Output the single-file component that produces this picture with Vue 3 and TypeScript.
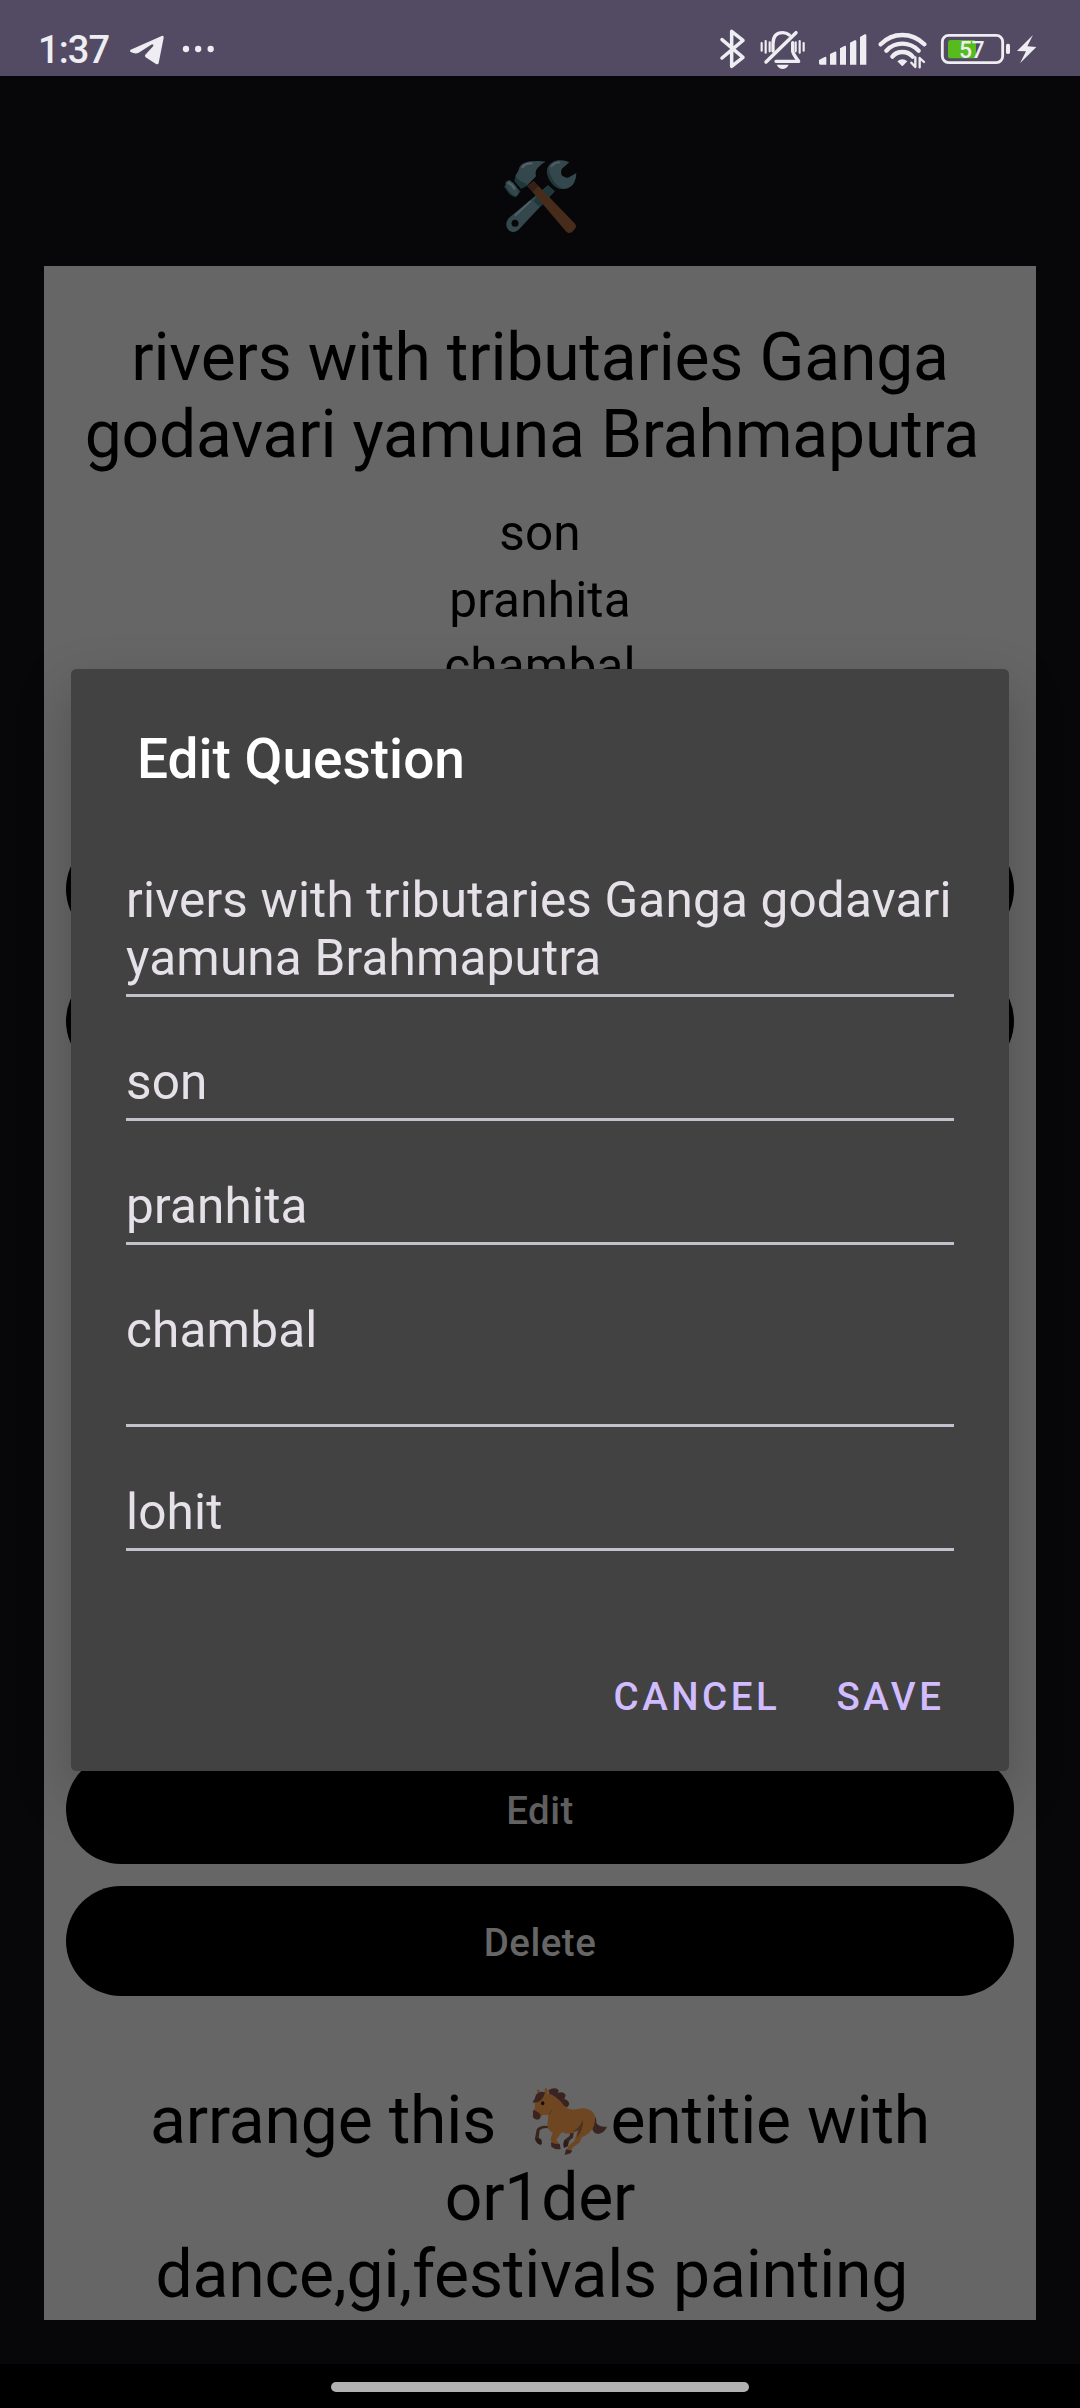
<script setup lang="ts">
interface Field {
  id: string
  lines: string[]
}

const question: string[] = ['rivers with tributaries Ganga', 'godavari yamuna Brahmaputra\u00a0']
const options: string[] = ['son', 'pranhita', 'chambal\n\u00a0', 'lohit']

const fields: Field[] = [
  { id: 'question', lines: ['rivers with tributaries Ganga godavari', 'yamuna Brahmaputra'] },
  { id: 'a', lines: ['son'] },
  { id: 'b', lines: ['pranhita'] },
  { id: 'c', lines: ['chambal', '\u00a0'] },
  { id: 'd', lines: ['lohit'] },
]
</script>

<template>
  <div class="screen">
    <header class="status">
      <span class="clock">1:37</span>
      <svg class="plane" viewBox="388 102 108 96" width="36" height="32">
        <path d="M393 149 L486 108 Q493 106 492 113 L477 189 Q475 195 469 192 L438 172 Q434 168 437 164 L461 138 Q463 133 457 133 L417 158 Q409 162 401 159 L393 156 Q388 153 393 149Z" />
      </svg>
      <svg class="dots" viewBox="546 135 99 24" width="33" height="8">
        <circle cx="558" cy="147" r="9.5" /><circle cx="594.5" cy="147" r="9.5" /><circle cx="632" cy="147" r="9.5" />
      </svg>
      <div class="indicators">
        <svg viewBox="88 84 84 126" width="28" height="42">
          <path class="line" stroke-width="10.5" d="M97 119 L160 172 L126 199 V94 L160 121 L97 174" />
        </svg>
        <svg class="bell" viewBox="208 84 144 126" width="48" height="42">
          <path class="line" stroke-width="10" d="M250 153 V130 Q251 98 279 98 Q291 98 299 105" stroke-linecap="butt" />
          <path class="line" stroke-width="10" d="M309 128 V153 Q310 162 327 184 H259" />
          <path class="line" stroke-width="10.5" d="M229 186 L319 98" />
          <path d="M261 194 H297 Q290 207 279 207 Q268 207 261 194Z" />
          <path class="line" stroke-width="6.5" stroke-linecap="butt" d="M216 129V152 M228 123V158 M240 127V154 M318 127V154 M330 123V158 M342 129V152" />
        </svg>
        <svg class="signal" viewBox="385 84 150 126" width="50" height="42">
          <path d="M388 190 V180 Q399 174 405 171 Q410 169 410 174 V194 H392Q388 194 388 190Z M421 194V162L435 155Q440 153 440 158V194Z M451 194V145L464 138Q469 136 469 141V194Z M481 194V128L495 121Q500 119 500 124V194Z M511 194V111L525 103Q530 101 530 106V194Z" />
        </svg>
        <svg class="wifi" viewBox="565 84 147 126" width="49" height="42">
          <path class="line" stroke-width="13" stroke-linecap="butt" d="M573 133 Q600 105 638 105 T704 133" />
          <path class="line" stroke-width="13" stroke-linecap="butt" d="M590 152 Q610 131 638 131 T687 152" />
          <path class="line" stroke-width="13" stroke-linecap="butt" d="M608 170 Q619 156 638 156 T669 170" />
          <path d="M623 184 Q638 171 653 184 L640 197 Q638 199 636 197Z" />
          <path class="line" stroke-width="7" stroke-linecap="butt" d="M677 172V201L665 188 M690 202V174L703 186" />
        </svg>
        <svg class="battery" viewBox="750 84 213 126" width="71" height="42">
          <rect class="line" x="757" y="106" width="181" height="82" rx="19" stroke-width="8.5" />
          <rect class="charge" x="774" y="120" width="84" height="55" rx="8" />
          <rect x="948" y="131" width="12" height="31" rx="5" />
          <text x="807" y="174" class="level">57</text>
        </svg>
        <svg class="bolt" viewBox="978 84 66 126" width="22" height="42">
          <path d="M1029 105 L981 153 L1008 154 L990 190 L1039 141 L1012 139Z" />
        </svg>
      </div>
    </header>

    <main class="page">
      <svg class="tools" viewBox="60 50 240 240" width="80" height="80">
        <path fill="#34474d" d="M204 135 L224 153 L118 266 Q104 282 88 271 Q73 259 82 240 Q84 236 90 230Z" />
        <path fill="#1e373b" d="M204 135 L224 153 L180 201 L160 181Z" />
        <path fill="#34474d" d="M268 66 Q252 58 234 60 Q210 64 202 84 Q198 106 212 124 Q226 146 250 146 Q274 145 283 126 Q289 112 289 98 L264 112 Q254 113 245 105 Q241 96 245 86Z" />
        <path fill="#1e373b" d="M205 79 Q198 106 212 124 Q226 146 250 146 Q229 137 218 118 Q207 100 205 79Z" />
        <path fill="none" stroke="#526268" stroke-width="5" stroke-linecap="round" d="M215 78 Q222 67 238 66 M106 225 L151 183" />
        <circle cx="105" cy="249" r="10.5" fill="#070709" />
        <path fill="#482c1b" d="M142 137 L161 122 L285 250 Q291 257 285 265 L276 275 Q267 281 259 274Z" />
        <path fill="#342019" d="M142 137 L161 122 L175 136 L158 156Z" />
        <path fill="#34474d" d="M107 105 Q116 93 119 79 Q128 65 155 63 Q178 60 197 64 Q183 70 173 83 Q164 92 168 108 L142 135 Q124 137 107 123Z" />
        <path fill="#1e373b" d="M107 105 Q112 121 136 129 L142 136 L123 146 L103 122Z" />
        <path fill="#1e373b" d="M88 119 L122 153 L109 169 Q100 172 88 161 L72 139Z" />
        <path fill="#34474d" d="M76 128 Q82 117 92 121 Q113 135 116 159 Q111 171 103 166 Q80 153 76 128Z" />
        <path fill="none" stroke="#526268" stroke-width="7" stroke-linecap="round" d="M128 80 Q136 69 155 69 M86 128 Q96 132 103 145" />
      </svg>

      <section class="sheet">
        <article class="entry first">
          <h2><span v-for="l in question" :key="l">{{ l }}</span></h2>
          <p v-for="o in options" :key="o" class="option">{{ o }}</p>
          <div class="buttons">
            <button aria-label="Edit"></button>
            <button aria-label="Delete"></button>
          </div>
        </article>

        <article class="entry second">
          <div class="buttons">
            <button>Edit</button>
            <button>Delete</button>
          </div>
        </article>

        <article class="entry third">
          <h2>
            <span>arrange this&nbsp;&nbsp;<svg class="horse" viewBox="84 75 246 220" width="82" height="73.3">
                <path fill="#39251c" d="M151 206 Q132 200 119 211 L116 233 L125 240 L123 253 Q111 254 105 235 L110 208 Q122 193 148 199Z" />
                <path fill="#39251c" d="M222 211 L219 233 Q204 240 204 258 L193 263 Q187 250 196 238 L209 228 L212 210Z" />
                <path fill="#2c1d1c" d="M109 234 L122 237 L126 250 L122 255 Q108 250 105 236Z M194 239 L206 247 L202 259 L192 264 Q188 250 194 239Z" />
                <path fill="#3a2422" d="M279 164 Q291 172 289 188 Q296 202 321 200 Q314 218 295 222 Q279 221 276 203Z" />
                <path fill="#3a2422" d="M145 91 Q163 80 175 89 Q177 94 174 99 Q191 92 197 106 L193 117 Q207 121 208 133 L202 142 L187 138 L150 107Z" />
                <path fill="#6f4622" d="M113 98 Q108 91 113 87 L122 96 L133 96 Q132 86 139 82 Q145 90 142 100 Q171 107 191 136 Q209 154 232 147 Q270 139 284 165 Q289 187 277 207 Q264 226 246 231 L238 248 L217 263 L211 278 L198 275 L206 257 L223 243 L233 213 Q211 226 185 217 L174 232 L169 239 L180 257 L169 263 L151 239 L158 218 Q137 207 143 187 L145 164 L127 165 L119 177 Q103 182 98 169 Q98 154 105 142 L104 119Z" />
                <path fill="#4b3220" d="M249 179 Q239 203 219 214 L235 211 L230 232 Q250 213 249 179Z M145 164 Q153 156 157 147 Q156 156 148 163Z" />
                <path fill="#3a2422" d="M135 98 Q121 91 108 104 Q105 119 97 127 Q125 132 135 98Z" />
                <path fill="#3a2422" d="M99 151 Q111 151 122 165 L119 176 Q108 183 99 172Z M153 246 L166 252 L179 251 L182 267 Q167 271 154 260Z M198 268 L217 272 L212 280 L194 285Z" />
                <ellipse cx="128" cy="130" rx="5" ry="6" fill="#170e0b" />
              </svg>entitie with</span>
            <span>or1der</span>
            <span>dance,gi,festivals painting&nbsp;</span>
          </h2>
        </article>
      </section>
    </main>

    <footer class="nav"><i /></footer>

    <div class="overlay">
      <div class="dialog" role="dialog">
        <h1>Edit Question</h1>
        <div class="fields">
          <div v-for="f in fields" :key="f.id" class="field">
            <span v-for="l in f.lines" :key="l">{{ l }}</span>
          </div>
        </div>
        <div class="actions">
          <a>CANCEL</a>
          <a>SAVE</a>
        </div>
      </div>
    </div>
  </div>
</template>

<style>
body {
  margin: 0;
  background: #070709;
}
</style>

<style scoped>
.screen {
  position: relative;
  width: 1080px;
  height: 2408px;
  overflow: hidden;
  display: flex;
  flex-direction: column;
  background: #070709;
  font-family: Roboto, "Liberation Sans", sans-serif;
}
.status {
  box-sizing: border-box;
  height: 76px;
  padding: 28px 42px 0 38px;
  display: flex;
  align-items: flex-start;
  background: #534b64;
  color: #eeedf2;
}
.status svg { fill: #eeedf2; display: block; }
.status .line { fill: none; stroke: #eeedf2; stroke-linejoin: round; stroke-linecap: round; }
.clock {
  font-size: 38px;
  font-weight: 500;
  line-height: 44px;
  letter-spacing: -0.9px;
  width: 91px;
}
.plane { margin-top: 6px; }
.dots { margin: 17px 0 0 17px; }
.indicators { margin-left: auto; display: flex; }
.bell { margin-left: 12px; }
.signal { margin-left: 11px; }
.wifi { margin-left: 10px; }
.battery { margin-left: 13px; }
.bolt { margin-left: 5px; }
.status .charge { fill: #57ba1d; }
.level { font: 500 69px Roboto, sans-serif; letter-spacing: -2px; }
.page {
  height: 2288px;
  display: flex;
  flex-direction: column;
  align-items: center;
}
.tools { margin: 80.7px 0 29.3px; flex: none; }
.sheet {
  width: 992px;
  height: 2054px;
  background: #666;
  overflow: hidden;
  flex: none;
}
.entry {
  display: flex;
  flex-direction: column;
  text-align: center;
  color: #000;
}
.first { height: 757px; padding-top: 53px; }
.second { height: 920px; justify-content: flex-end; }
.third { padding-top: 86px; }
h2 {
  margin: 0 0 31px;
  font-size: 66px;
  font-weight: 400;
  line-height: 77px;
  letter-spacing: -0.18px;
  display: flex;
  flex-direction: column;
}
h2 span { height: 77px; white-space: nowrap; }
.horse { vertical-align: -15.3px; }
.option {
  margin: 0 0 8.6px;
  font-size: 49.5px;
  line-height: 58px;
  letter-spacing: 0.17px;
  white-space: pre-line;
}
.buttons {
  margin: auto 22px 0;
  display: flex;
  flex-direction: column;
  gap: 22px;
}
.second .buttons { margin-top: 0; }
button {
  height: 110px;
  padding: 3px 0 0;
  border: 0;
  border-radius: 55px;
  background: #000;
  color: #666;
  font: 500 38.5px Roboto, sans-serif;
  letter-spacing: 0.5px;
}
.nav {
  height: 44px;
  background: #000;
  display: flex;
  justify-content: center;
}
.nav i {
  width: 418px;
  height: 10px;
  margin-top: 17.5px;
  border-radius: 5px;
  background: #b1b1b1;
}
.overlay {
  position: absolute;
  inset: 0;
  padding-top: 669px;
  display: flex;
  justify-content: center;
  align-items: flex-start;
}
.dialog {
  box-sizing: border-box;
  width: 938px;
  height: 1102px;
  padding: 58px 55px 0;
  border-radius: 5.5px;
  background: #424242;
  box-shadow: 0 22px 56px rgba(0, 0, 0, 0.22);
}
h1 {
  margin: 0 0 65px 11px;
  color: #fff;
  font-size: 55px;
  font-weight: 500;
  line-height: 65px;
}
.fields { display: flex; flex-direction: column; gap: 56px; padding-top: 14px; }
.field {
  display: flex;
  flex-direction: column;
  padding-bottom: 7px;
  color: #e6e1e9;
  font-size: 49.5px;
  line-height: 58px;
  letter-spacing: 0.17px;
  white-space: nowrap;
  border-bottom: 3px solid #c4c0cc;
}
.actions {
  margin-top: 122.5px;
  display: flex;
  justify-content: flex-end;
  gap: 56px;
  padding-right: 9.5px;
  color: #d0bcff;
  font-size: 38.5px;
  font-weight: 500;
  letter-spacing: 3.55px;
  line-height: 46px;
}
</style>
